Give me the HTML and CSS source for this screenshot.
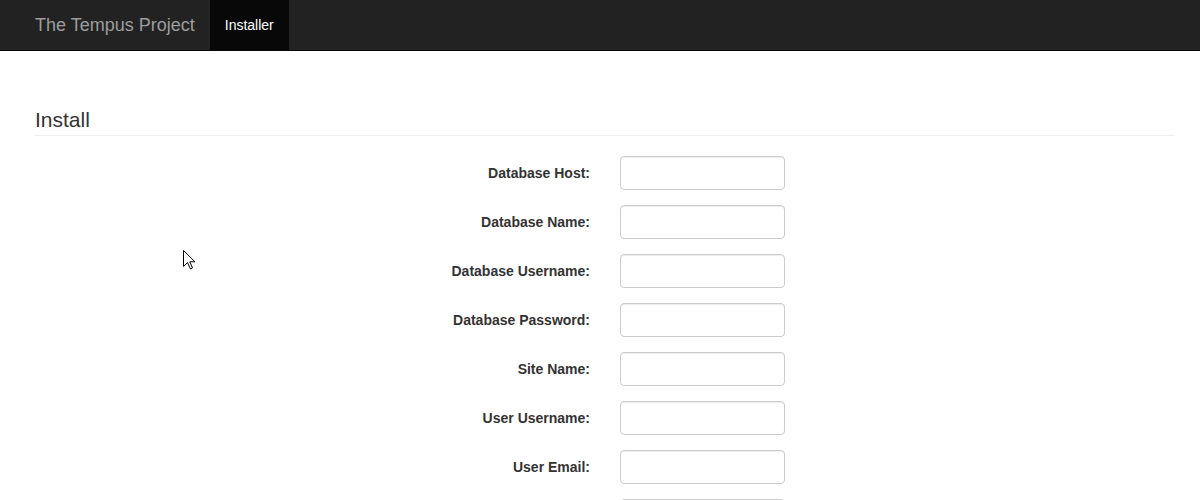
FILE: index.html
```html
<!DOCTYPE html>
<html>
<head>
<meta charset="utf-8">
<title>Installer</title>
<link rel="stylesheet" href="styles.css">
</head>
<body>
<nav class="navbar">
  <a class="brand" href="#">The Tempus Project</a>
  <a class="nav-item active" href="#">Installer</a>
</nav>
<main class="main">
  <h1 class="page-header">Install</h1>
  <form class="form">
    <div class="row"><label>Database Host:</label><input type="text"></div>
    <div class="row"><label>Database Name:</label><input type="text"></div>
    <div class="row"><label>Database Username:</label><input type="text"></div>
    <div class="row"><label>Database Password:</label><input type="password"></div>
    <div class="row"><label>Site Name:</label><input type="text"></div>
    <div class="row"><label>User Username:</label><input type="text"></div>
    <div class="row"><label>User Email:</label><input type="text"></div>
    <div class="row"><label>User Password:</label><input type="password"></div>
  </form>
</main>
<svg class="cursor" width="13" height="20" viewBox="0 0 13 20">
  <path d="M0.5 0.5 L0.5 16.5 L4.5 12.5 L7.5 19 L9.5 18 L6.8 11.8 L12 11.8 Z" fill="#fff" stroke="#000" stroke-width="1" stroke-linejoin="miter"/>
</svg>
</body>
</html>
```
FILE: styles.css
```css
html, body {
  margin: 0;
  padding: 0;
  background: #fff;
  font-family: "Liberation Sans", Arial, sans-serif;
  font-size: 14px;
  color: #333;
  overflow: hidden;
  height: 500px;
}
.navbar {
  height: 50px;
  background: #222;
  border-bottom: 1px solid #080808;
  display: flex;
  align-items: stretch;
  padding-left: 20px;
}
.brand {
  display: flex;
  align-items: center;
  padding: 0 15px;
  font-size: 18px;
  color: #9d9d9d;
  text-decoration: none;
}
.nav-item {
  display: flex;
  align-items: center;
  padding: 0 15px;
  font-size: 14px;
  color: #9d9d9d;
  text-decoration: none;
}
.nav-item.active {
  background: #080808;
  color: #fff;
}
.main {
  padding: 0 25px 0 35px;
}
.page-header {
  margin: 57px 0 20px 0;
  padding: 0 0 3px 0;
  font-size: 21px;
  line-height: 24px;
  font-weight: normal;
  color: #333;
  border-bottom: 1px solid #eee;
}
.form {
  display: flex;
  flex-direction: column;
  gap: 15px;
}
.row {
  display: grid;
  grid-template-columns: 555px 165px;
  column-gap: 30px;
  align-items: center;
}
.row label {
  text-align: right;
  font-weight: bold;
  font-size: 14px;
  color: #333;
}
.row input {
  box-sizing: border-box;
  width: 165px;
  height: 34px;
  border: 1px solid #ccc;
  border-radius: 4px;
  padding: 6px 12px;
  box-shadow: inset 0 1px 1px rgba(0,0,0,.075);
  font-size: 14px;
  margin: 0;
}
.cursor {
  position: absolute;
  left: 183px;
  top: 250px;
}
```
